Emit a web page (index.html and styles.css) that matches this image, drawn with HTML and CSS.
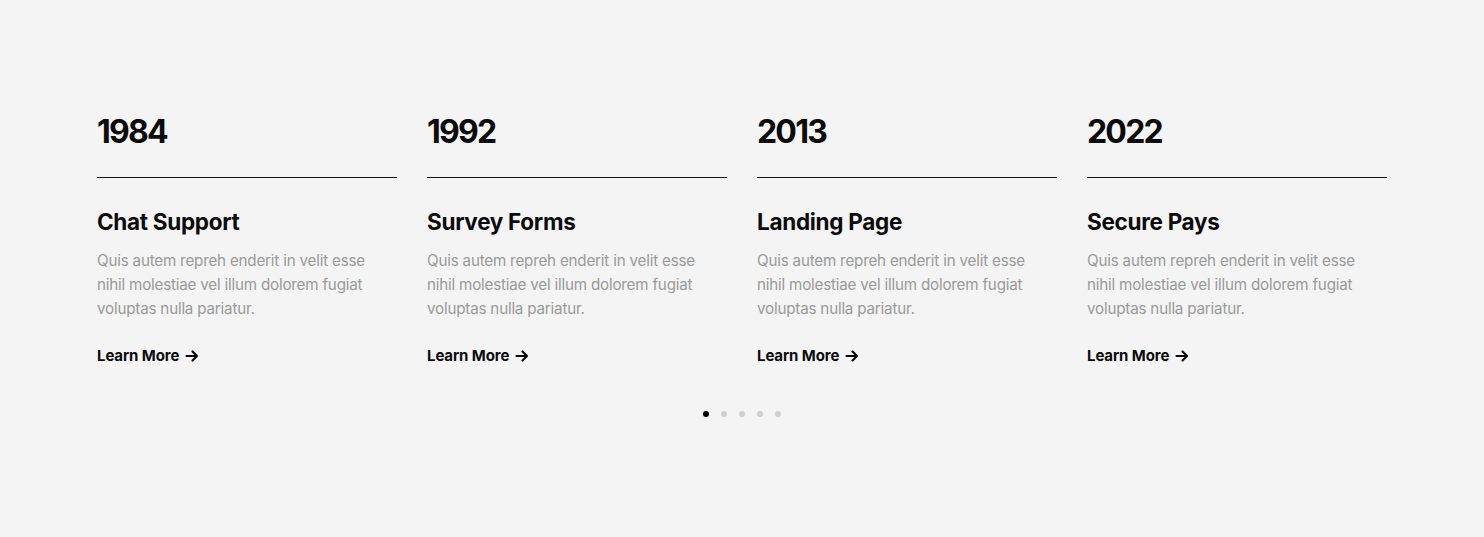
FILE: index.html
```html
<!DOCTYPE html>
<html>
<head>
<meta charset="utf-8">
<link rel="stylesheet" href="styles.css">
</head>
<body>
<section class="timeline">
  <div class="cards">
    <article class="card">
      <div class="year">1984</div>
      <h3 class="title">Chat Support</h3>
      <p class="desc">Quis autem repreh enderit in velit esse nihil molestiae vel illum dolorem fugiat voluptas nulla pariatur.</p>
      <a class="more" href="#">Learn More <svg class="arrow" viewBox="0 0 14 14" width="14" height="14"><path d="M1.5 7H12M7.5 2.5L12 7L7.5 11.5" fill="none" stroke="currentColor" stroke-width="2.2" stroke-linecap="round" stroke-linejoin="round"/></svg></a>
    </article>
    <article class="card">
      <div class="year">1992</div>
      <h3 class="title">Survey Forms</h3>
      <p class="desc">Quis autem repreh enderit in velit esse nihil molestiae vel illum dolorem fugiat voluptas nulla pariatur.</p>
      <a class="more" href="#">Learn More <svg class="arrow" viewBox="0 0 14 14" width="14" height="14"><path d="M1.5 7H12M7.5 2.5L12 7L7.5 11.5" fill="none" stroke="currentColor" stroke-width="2.2" stroke-linecap="round" stroke-linejoin="round"/></svg></a>
    </article>
    <article class="card">
      <div class="year">2013</div>
      <h3 class="title">Landing Page</h3>
      <p class="desc">Quis autem repreh enderit in velit esse nihil molestiae vel illum dolorem fugiat voluptas nulla pariatur.</p>
      <a class="more" href="#">Learn More <svg class="arrow" viewBox="0 0 14 14" width="14" height="14"><path d="M1.5 7H12M7.5 2.5L12 7L7.5 11.5" fill="none" stroke="currentColor" stroke-width="2.2" stroke-linecap="round" stroke-linejoin="round"/></svg></a>
    </article>
    <article class="card">
      <div class="year">2022</div>
      <h3 class="title">Secure Pays</h3>
      <p class="desc">Quis autem repreh enderit in velit esse nihil molestiae vel illum dolorem fugiat voluptas nulla pariatur.</p>
      <a class="more" href="#">Learn More <svg class="arrow" viewBox="0 0 14 14" width="14" height="14"><path d="M1.5 7H12M7.5 2.5L12 7L7.5 11.5" fill="none" stroke="currentColor" stroke-width="2.2" stroke-linecap="round" stroke-linejoin="round"/></svg></a>
    </article>
  </div>
  <div class="dots">
    <span class="dot active"></span>
    <span class="dot"></span>
    <span class="dot"></span>
    <span class="dot"></span>
    <span class="dot"></span>
  </div>
</section>
</body>
</html>
```
FILE: styles.css
```css
html, body {
  margin: 0;
  padding: 0;
  background: #f4f4f4;
}
body {
  font-family: "Inter", "Noto Sans", sans-serif;
  color: #0b0b0b;
  height: 537px;
}
.timeline {
  padding-top: 110px;
}
.cards {
  display: flex;
  justify-content: center;
  gap: 30px;
}
.card {
  width: 300px;
  display: flex;
  flex-direction: column;
  align-items: flex-start;
}
.year {
  align-self: stretch;
  font-size: 32px;
  line-height: 44px;
  font-weight: 700;
  letter-spacing: -1.8px;
  padding-bottom: 23px;
  border-bottom: 1px solid #111;
}
.title {
  margin: 28px 0 0;
  font-size: 22.5px;
  line-height: 32px;
  font-weight: 700;
  letter-spacing: -0.3px;
}
.desc {
  margin: 11px 0 0;
  max-width: 290px;
  font-size: 15.2px;
  line-height: 24px;
  color: #9a9a9a;
  letter-spacing: -0.2px;
}
.more {
  margin-top: 25px;
  display: flex;
  align-items: center;
  gap: 6px;
  font-size: 15px;
  line-height: 20px;
  font-weight: 700;
  color: #0b0b0b;
  text-decoration: none;
  letter-spacing: -0.1px;
}
.arrow {
  display: block;
}
.dots {
  margin-top: 45px;
  display: flex;
  justify-content: center;
  gap: 12px;
}
.dot {
  width: 6px;
  height: 6px;
  border-radius: 50%;
  background: #cfcfcf;
}
.dot.active {
  background: #000;
}
```
